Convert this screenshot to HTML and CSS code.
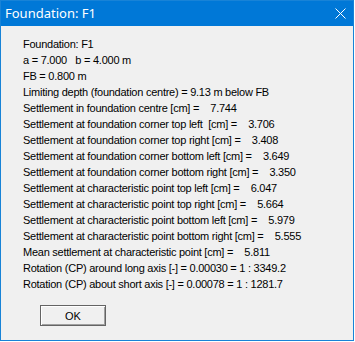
FILE: index.html
```html
<!DOCTYPE html>
<html lang="en">
<head>
  <meta charset="UTF-8" />
  <title>Foundation: F1</title>
  <link rel="stylesheet" href="styles.css">
</head>
<body>
  <div class="window">
    <div class="titlebar">
      <span class="title">Foundation: F1</span>
      <svg class="close" width="11" height="11" viewBox="0 0 11 11">
        <path d="M0.5 0.5 L10.5 10.5 M10.5 0.5 L0.5 10.5" stroke="#fff" stroke-width="1" fill="none"/>
      </svg>
    </div>

    <div class="content">
      <div class="results">
        <p>Foundation: F1</p>
        <p>a = 7.000   b = 4.000 m</p>
        <p>FB = 0.800 m</p>
        <p>Limiting depth (foundation centre) = 9.13 m below FB</p>
        <p>Settlement in foundation centre [cm] =    7.744</p>
        <p>Settlement at foundation corner top left  [cm] =    3.706</p>
        <p>Settlement at foundation corner top right [cm] =    3.408</p>
        <p>Settlement at foundation corner bottom left [cm] =    3.649</p>
        <p>Settlement at foundation corner bottom right [cm] =    3.350</p>
        <p>Settlement at characteristic point top left [cm] =    6.047</p>
        <p>Settlement at characteristic point top right [cm] =    5.664</p>
        <p>Settlement at characteristic point bottom left [cm] =    5.979</p>
        <p>Settlement at characteristic point bottom right [cm] =    5.555</p>
        <p>Mean settlement at characteristic point [cm] =    5.811</p>
        <p>Rotation (CP) around long axis [-] = 0.00030 = 1 : 3349.2</p>
        <p>Rotation (CP) about short axis [-] = 0.00078 = 1 : 1281.7</p>
      </div>

      <button class="ok-btn">OK</button>
    </div>
  </div>
</body>
</html>
```

FILE: styles.css
```css
* {
  margin: 0;
  padding: 0;
  box-sizing: border-box;
}

body {
  background: #fff;
  font-family: 'Liberation Sans', Arial, sans-serif;
}

.window {
  width: 354px;
  height: 341px;
  border: 1px solid #1883d7;
  background: #f0f0f0;
  display: flex;
  flex-direction: column;
}

.titlebar {
  height: 25px;
  background: #0078d7;
  display: flex;
  align-items: center;
  justify-content: space-between;
  padding: 0 7px 1px 4px;
}

.title {
  color: #fff;
  font-family: 'Noto Sans', 'Open Sans', sans-serif;
  font-size: 13px;
}

.close {
  display: block;
  margin-top: 1px;
}

.content {
  flex: 1;
  padding: 10px 0 0 22px;
}

.results p {
  font-size: 11px;
  line-height: 16px;
  letter-spacing: -0.25px;
  color: #000;
  white-space: pre;
}

.ok-btn {
  display: block;
  margin: 13px 0 0 17px;
  width: 66px;
  height: 21px;
  background: #f0f0f0;
  border: 1px solid #646464;
  box-shadow: inset 1px 1px 0 #fff, inset -1px -1px 0 #a0a0a0;
  font-family: 'Liberation Sans', Arial, sans-serif;
  font-size: 11px;
  color: #000;
}
```
